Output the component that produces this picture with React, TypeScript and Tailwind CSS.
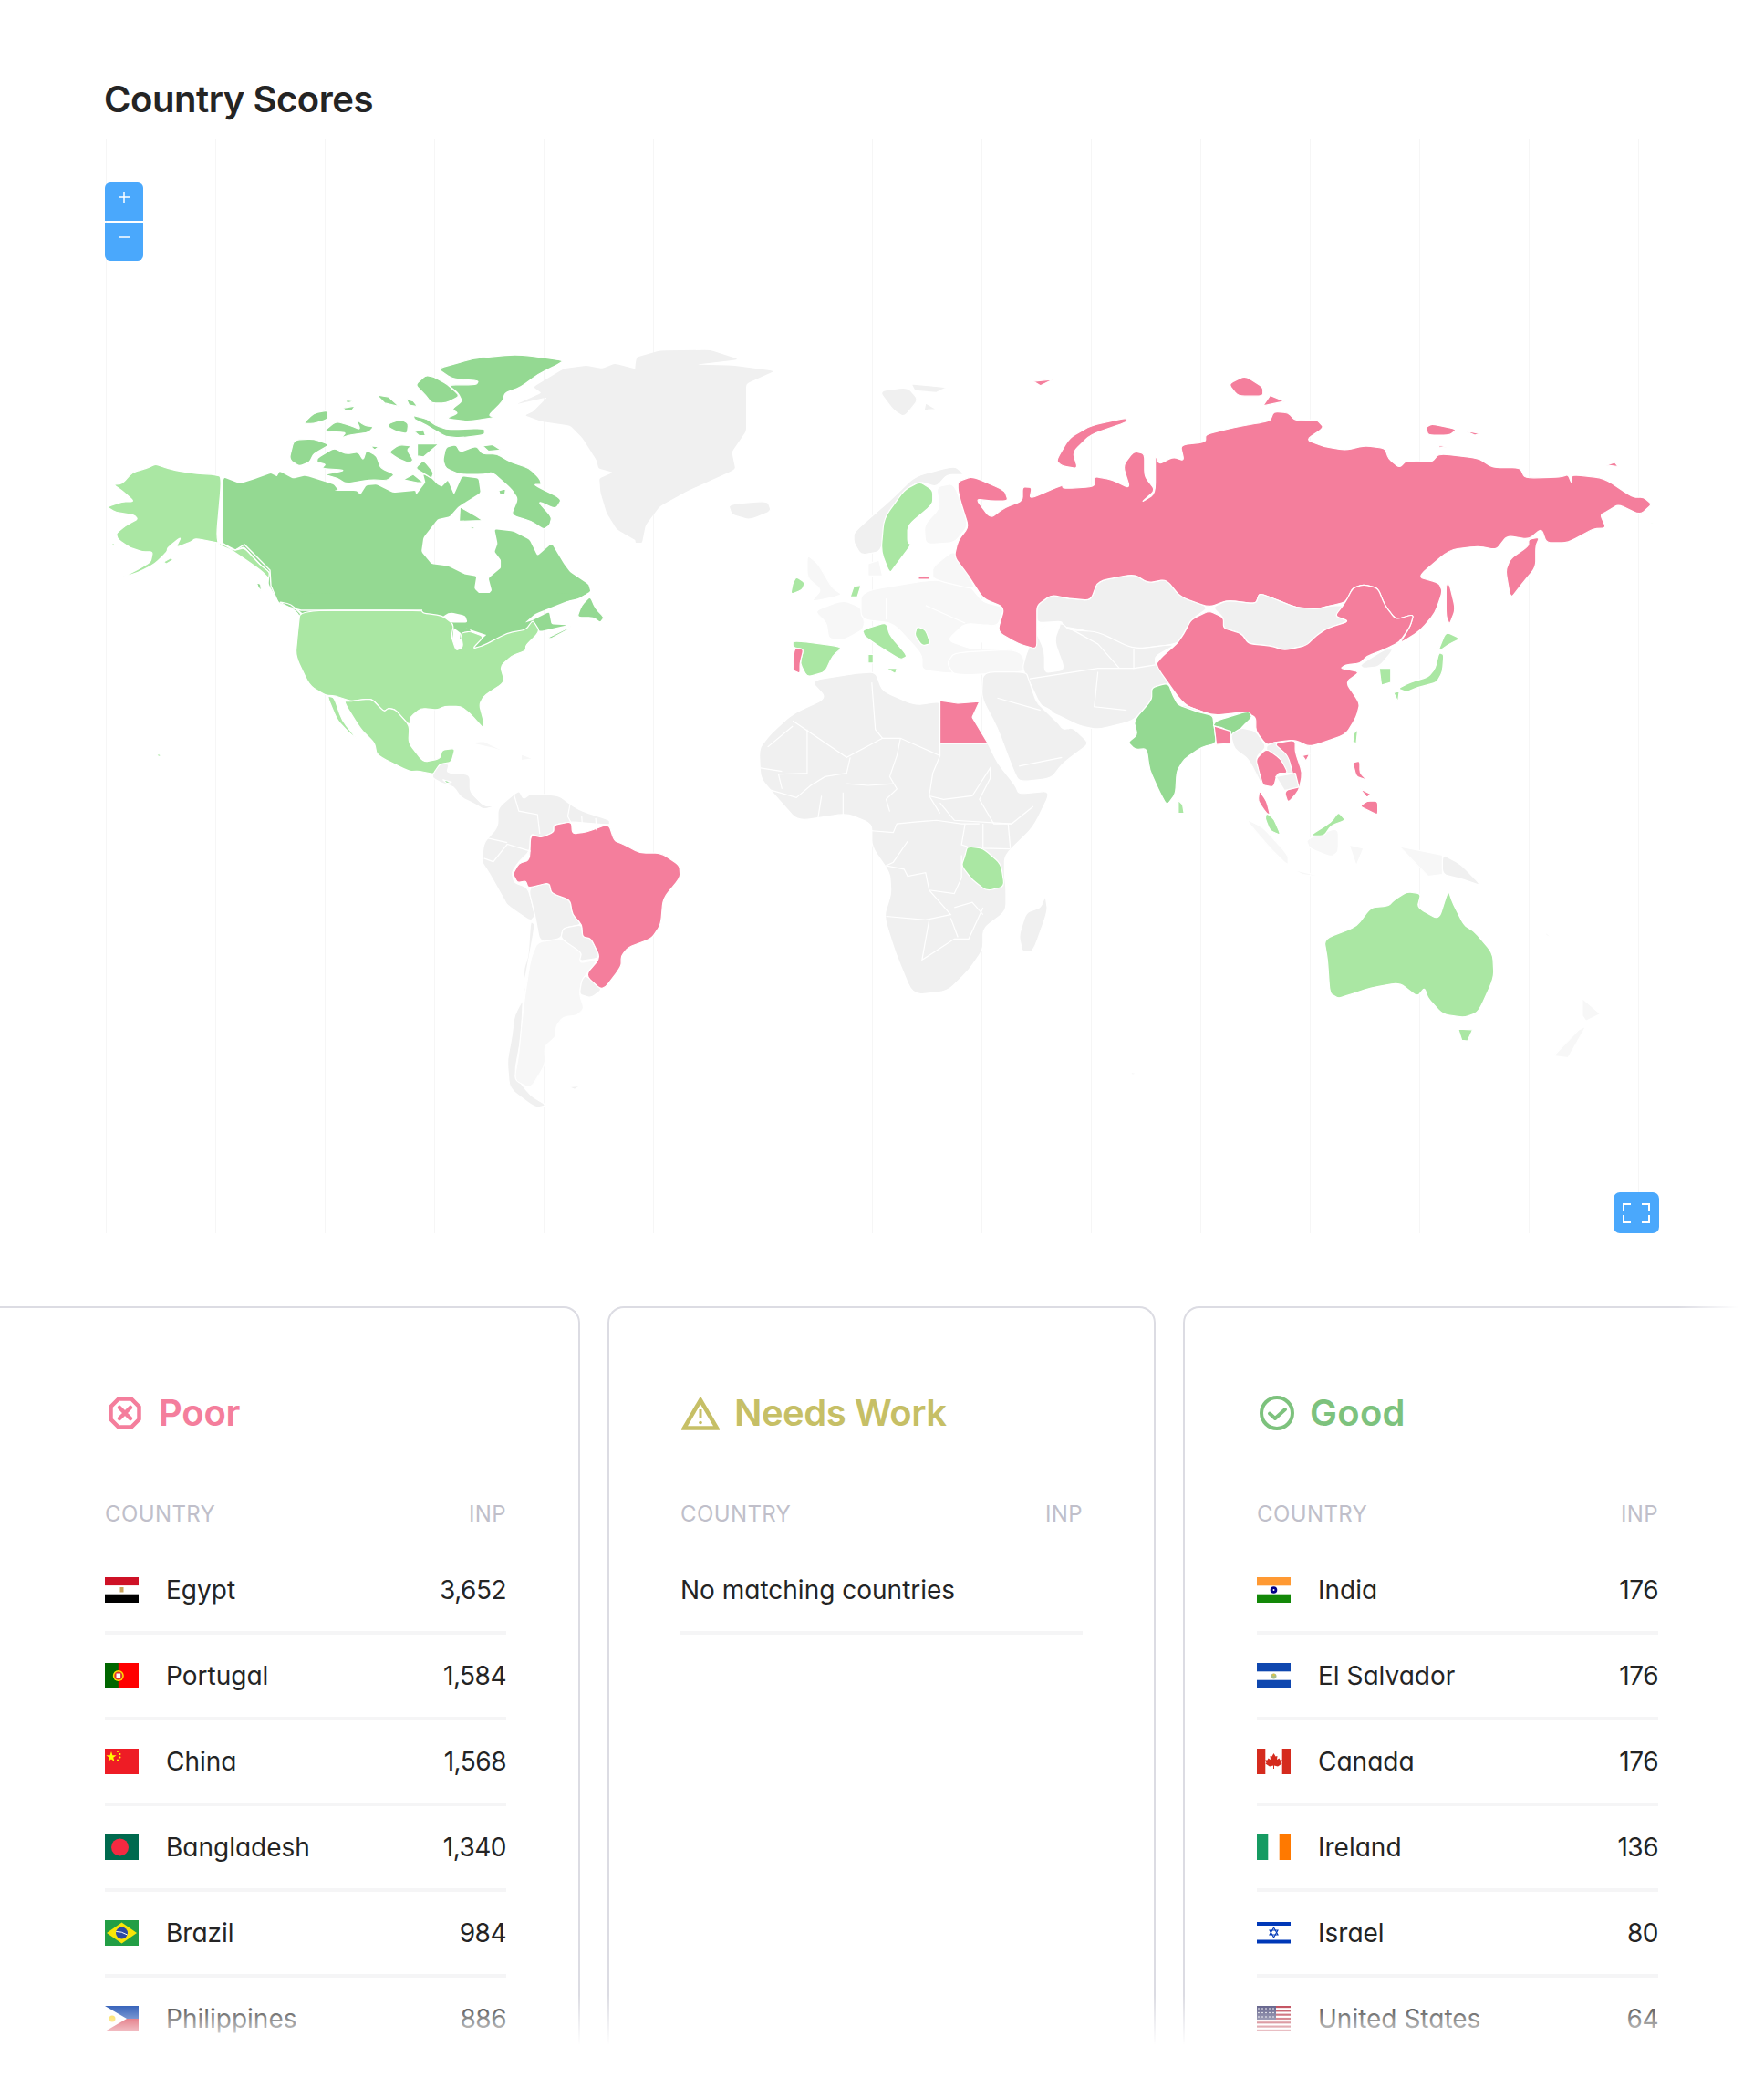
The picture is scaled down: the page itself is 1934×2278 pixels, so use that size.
import React from "react";

const PINK = "#f47e9c";
const G1 = "#aae7a3";
const G2 = "#94d992";
const GR = "#f0f0f0";
const LG = "#f7f7f7";

type Shape = [string, string, boolean?, boolean?];

const T1: Shape[] = [
  [G2, "548,1172 590,1188 630,1175 665,1162 680,1170 687,1158 720,1175 750,1168 820,1190 830,1203 820,1205 875,1205 885,1215 900,1192 925,1190 965,1210 1020,1205 1022,1215 1045,1185 1040,1165 1060,1175 1075,1190 1085,1195 1100,1180 1115,1215 1135,1170 1175,1175 1180,1210 1140,1235 1125,1245 1105,1268 1075,1275 1040,1320 1035,1355 1060,1385 1100,1390 1140,1410 1170,1415 1165,1445 1190,1470 1208,1450 1200,1420 1230,1395 1230,1375 1215,1355 1222,1335 1215,1300 1260,1305 1300,1325 1320,1365 1355,1335 1385,1385 1400,1405 1445,1435 1450,1452 1420,1470 1370,1480 1320,1495 1290,1525 1250,1568 800,1568 735,1498 685,1480 660,1435 662,1405 640,1385 600,1342 575,1350 546,1332", true],
  [G1, "545,1170 520,1165 480,1163 430,1155 405,1148 382,1140 360,1150 325,1160 300,1188 278,1190 300,1205 330,1232 300,1232 262,1245 285,1258 330,1265 338,1275 310,1290 285,1310 290,1325 320,1345 350,1355 375,1355 370,1380 340,1398 296,1420 340,1405 380,1385 410,1355 412,1345 445,1318 432,1345 470,1330 480,1322 545,1335 575,1352 600,1345 640,1388 662,1405 660,1420 640,1400 600,1372 570,1352 530,1335"],
  [G1, "402,1380 420,1370 425,1375 408,1385"],
  [G1, "270,1335 282,1335 280,1340"],
  [G2, "630,1430 640,1435 642,1452 634,1442"],
  [G2, "1075,905 1130,890 1165,880 1270,870 1385,885 1370,895 1320,920 1280,950 1240,965 1235,985 1200,1020 1215,1025 1150,1035 1095,1028 1125,1015 1110,1005 1135,985 1125,965 1100,945 1170,945 1175,935 1110,930"],
  [G2, "1045,922 1065,925 1100,945 1125,968 1125,975 1095,990 1060,990 1045,970 1020,945"],
  [G2, "925,970 955,975 980,998 945,990"],
  [G2, "998,980 1015,985 1025,998 1005,995"],
  [G2, "850,982 870,985 852,990"],
  [G2, "842,1002 872,997 865,1007 848,1008"],
  [G2, "745,1040 770,1015 805,1008 805,1030 770,1040"],
  [G2, "800,1055 825,1035 860,1045 885,1055 875,1030 895,1045 918,1048 905,1062 860,1068 838,1075 850,1062 800,1060"],
  [G2, "955,1040 985,1030 1003,1040 1000,1065 975,1060 955,1050"],
  [G2, "1015,1020 1050,1030 1070,1045 1100,1055 1190,1052 1190,1068 1130,1075 1095,1072 1065,1055 1040,1040 1018,1030"],
  [G2, "1018,1060 1040,1055 1045,1070 1030,1070"],
  [G2, "722,1080 770,1078 810,1092 770,1115 760,1135 735,1145 710,1128"],
  [G2, "780,1125 820,1100 850,1115 880,1110 892,1130 900,1105 925,1120 935,1150 970,1165 950,1180 910,1178 850,1188 830,1175 795,1165 850,1155 790,1150 800,1140 778,1135"],
  [G2, "910,1095 930,1097 920,1105"],
  [G2, "955,1110 980,1092 1010,1095 1000,1105 1015,1130 1005,1138 975,1125"],
  [G2, "1025,1090 1078,1090 1040,1122 1025,1120"],
  [G2, "1020,1150 1040,1130 1065,1160 1060,1175 1045,1165"],
  [G2, "990,1178 1015,1165 1040,1185 1025,1185"],
  [G2, "1088,1130 1095,1098 1120,1092 1130,1110 1170,1095 1185,1115 1220,1115 1255,1135 1300,1150 1325,1175 1330,1190 1310,1190 1380,1225 1365,1250 1320,1230 1355,1270 1350,1290 1335,1300 1305,1280 1255,1265 1272,1225 1255,1200 1210,1160 1190,1165 1130,1165 1095,1150"],
  [G2, "1185,1095 1210,1092 1230,1105 1200,1108"],
  [G2, "1130,1245 1170,1268 1185,1278 1128,1280"],
  [G2, "1155,1295 1170,1293 1160,1300"],
  [G2, "1225,1205 1242,1200 1240,1215 1228,1215"],
  [GR, "1385,905 1440,898 1480,905 1510,893 1575,910 1575,1335 1515,1300 1490,1260 1475,1210 1472,1175 1505,1160 1470,1150 1465,1130 1430,1075 1400,1045 1330,1035 1290,1020 1310,1010 1345,975 1268,993 1330,965 1310,950", true],
];

const T3: Shape[] = [
  [G2, "640,0 1265,0 1215,25 1150,60 1128,85 1145,78 1180,55 1185,90 1220,92 1160,110 1145,78 1130,105 1090,115 1040,150 1015,160 1040,125 1000,110 990,115 1005,90 975,90 950,65 905,50 645,50", true],
  [G2, "598,25 625,32 650,65 650,80 635,50"],
  [G2, "1250,35 1268,10 1280,45 1298,70 1290,85 1275,70 1240,70"],
  [G2, "1175,130 1228,95 1220,105 1185,130"],
  ["#ffffff", "935,85 965,55 1000,65 1005,85 975,85 950,82"],
  ["#ffffff", "975,100 990,115 985,160 970,155"],
  ["#ffffff", "1000,100 1045,120 1020,150 1010,105"],
  [G1, "645,50 905,50 910,58 950,65 975,90 970,125 980,165 995,155 990,115 1010,110 1040,125 1015,160 1040,150 1090,115 1130,105 1145,78 1160,110 1130,150 1130,165 1100,180 1075,210 1085,255 1040,295 1030,320 1040,370 1040,390 1010,345 990,325 955,325 940,335 905,330 882,355 880,380 850,335 835,330 825,340 800,305 780,305 755,310 720,295 700,293 665,265 635,180 640,110"],
  [G1, "738,310 755,310 780,305 800,305 825,340 835,330 850,335 880,380 878,430 910,485 945,475 950,450 978,445 970,485 945,490 935,520 900,510 880,512 810,465 805,430 775,390"],
  [G1, "703,295 718,300 735,365 768,420 750,400 725,365"],
  [G1, "338,460 347,465 340,470"],
  [GR, "930,520 945,490 965,490 960,515 1010,520 1010,570 1040,610 1065,610 1040,620 1020,605 990,585 975,555 950,545 930,530"],
  [G2, "952,535 970,542 960,545"],
  [LG, "1005,428 1040,425 1090,458 1060,445"],
  [LG, "1120,462 1145,475 1120,480"],
  [GR, "1070,615 1115,565 1125,590 1140,575 1200,580 1225,605 1250,625 1310,650 1310,665 1228,655 1190,665 1190,685 1165,700 1140,690 1138,740 1115,770 1100,800 1105,830 1135,845 1150,925 1140,940 1090,895 1080,870 1050,800 1035,770 1040,715 1070,670"],
  [GR, "1140,940 1135,1040 1125,1080 1130,1150 1105,1210 1100,1270 1090,1340 1095,1420 1150,1475 1175,1468 1140,1440 1105,1380 1120,1270 1125,1130 1150,950"],
  [LG, "1155,1000 1210,990 1250,1030 1245,1060 1285,1050 1250,1110 1245,1150 1255,1190 1240,1210 1210,1215 1195,1240 1195,1270 1170,1300 1172,1350 1140,1420 1105,1395 1115,1320 1125,1180 1140,1050"],
  [GR, "1135,845 1180,830 1185,860 1225,880 1230,920 1250,950 1210,960 1205,990 1160,1000 1150,925"],
  [GR, "1210,960 1250,950 1252,985 1270,990 1290,1045 1245,1055 1250,1030 1205,990"],
  [GR, "1258,1095 1295,1135 1270,1160 1245,1150 1250,1110"],
  [PINK, "1140,693 1165,700 1190,685 1190,665 1228,655 1230,690 1260,685 1308,662 1320,710 1340,720 1375,745 1420,745 1460,780 1462,815 1425,875 1420,950 1400,990 1350,1015 1335,1040 1335,1070 1295,1140 1258,1095 1290,1045 1270,990 1252,985 1250,950 1230,920 1225,880 1185,860 1180,830 1135,845 1130,825 1112,830 1102,805 1115,775 1138,765"],
  [GR, "1222,1415 1248,1412 1235,1422"],
];
const T3Lines = [
  "1105,580 1115,625 1155,635 1160,690",
  "1225,605 1220,640 1240,690",
  "1250,640 1252,680",
  "1280,645 1282,680",
  "1040,760 1060,770 1090,720 1140,740",
  "1040,700 1090,715",
];

const T2: Shape[] = [
  [GR, "-5,110 30,90 100,88 140,115 80,130 130,132 190,148 150,185 150,260 150,320 130,380 135,430 70,490 30,535 10,590 5,640 -5,640", true],
  [GR, "125,530 180,520 185,550 155,575 130,560"],
  [GR, "335,205 375,195 390,230 370,280 355,260"],
  [GR, "380,185 430,195 415,210 385,205"],
  [GR, "400,240 415,258 398,260"],
  [GR, "300,610 350,520 385,450 440,420 455,445 430,445 415,480 392,465 370,490 345,570 338,665 310,675 300,640"],
  [G1, "370,490 392,465 410,490 410,530 375,590 375,640 380,645 360,700 350,728 338,665 342,570"],
  [LG, "415,480 440,470 460,590 440,640 400,645 398,590 420,540"],
  [LG, "320,700 335,690 340,735 320,735"],
  [LG, "235,675 250,700 270,770 285,790 240,810 255,775 235,740"],
  [G1, "220,738 232,755 228,775 212,788 215,755"],
  [LG, "245,835 285,805 310,825 315,870 312,890 285,920 265,915 262,870"],
  [LG, "310,780 410,745 460,760 480,810 510,825 500,880 455,870 430,920 465,945 530,945 535,1000 435,1015 395,1005 395,960 355,870 310,860"],
  [LG, "410,710 440,660 460,735 470,775 410,745"],
  [LG, "430,985 440,955 530,945 545,1010 440,1020"],
  ["#ffffff", "440,895 490,870 500,905 470,935 440,920"],
  [G1, "300,765 310,762 305,795 295,795"],
  [G1, "215,920 285,938 270,965 260,1010 235,1025 225,985 230,945 215,940"],
  [PINK, "217,942 230,945 225,985 225,1015 215,1005"],
  [G1, "312,890 345,868 350,905 375,965 365,975 330,930 315,908"],
  [G1, "345,1000 360,1000 358,1015"],
  [G1, "320,960 327,960 327,985 320,985"],
  [G1, "388,880 400,890 407,930 395,935 385,905"],
  [GR, "555,820 575,790 600,800 630,805 640,750 690,730 710,755 735,745 755,795 795,825 770,860 760,900 750,930 690,945 660,920 620,890 590,880 590,865 555,870"],
  [GR, "555,885 590,870 600,890 640,895 690,945 750,930 720,965 720,990 745,1040 715,1055 715,1090 690,1150 640,1175 615,1165 575,1125 560,1105 545,1040 535,1000 540,960"],
  [GR, "478,1085 500,1170 520,1280 530,1325 575,1315 590,1275 605,1250 628,1215 605,1170 590,1175 575,1120 555,1100 545,1040 540,1010 480,1010"],
  ["#ffffff", "552,890 590,865 580,920 595,1005 565,1015 565,950"],
  ["#ffffff", "555,1100 575,1120 600,1175 585,1160"],
  [PINK, "445,465 465,450 510,490 515,520 490,520 470,515 490,570 510,540 535,520 535,480 548,482 545,515 590,475 592,485 635,480 635,450 660,460 685,485 675,420 690,378 705,385 705,450 720,490 700,525 720,500 720,385 725,415 745,395 760,405 755,360 790,352 790,330 830,310 870,295 880,290 885,265 905,268 915,290 945,288 955,310 930,345 955,365 985,375 1012,362 1040,370 1045,400 1060,425 1070,405 1105,410 1115,385 1170,398 1190,425 1228,425 1235,455 1285,452 1295,445 1300,470 1300,445 1345,455 1385,510 1400,510 1412,530 1395,560 1365,530 1350,550 1340,560 1348,598 1330,600 1295,640 1265,640 1258,600 1240,630 1210,620 1195,660 1170,650 1130,660 1085,738 1115,755 1120,780 1110,840 1090,890 1060,930 1075,880 1080,845 1055,860 1040,820 1030,770 1010,760 995,770 985,810 965,820 945,830 915,825 885,800 865,785 860,815 820,805 795,825 755,795 735,745 710,755 690,730 640,750 630,805 600,800 575,790 555,820 555,870 555,885 555,945 530,930 500,895 510,825 480,800 460,735 440,680 445,635 460,595 450,530 445,490"],
  [PINK, "582,405 600,340 630,305 680,282 680,295 630,330 605,380 612,428 590,420"],
  [PINK, "822,185 845,162 870,195 870,220 835,220"],
  [PINK, "880,218 900,235 870,248"],
  [PINK, "1097,310 1105,300 1140,315 1130,332 1100,332"],
  [PINK, "1150,318 1172,328 1165,332"],
  [PINK, "1115,362 1130,365 1115,368"],
  [PINK, "1348,418 1360,410 1365,422"],
  [PINK, "550,178 578,172 560,190"],
  [PINK, "1125,760 1130,760 1138,830 1130,875 1125,850"],
  [PINK, "1240,630 1255,625 1250,650 1250,710 1230,760 1215,800 1208,720 1215,685 1240,650"],
  [PINK, "390,738 405,735 405,745 390,745"],
  [G1, "1405,578 1418,585 1408,582"],
  [GR, "800,825 820,805 860,815 865,785 885,800 915,825 945,830 965,820 985,820 970,850 990,865 960,885 945,905 930,935 900,948 880,935 850,930 840,900 815,885 815,855"],
  [PINK, "795,835 815,855 815,885 840,900 850,930 880,935 900,948 930,935 945,905 960,885 990,865 970,850 985,810 995,770 1010,760 1030,770 1040,820 1055,860 1080,845 1075,880 1060,925 1040,945 1015,965 1005,985 985,990 978,1000 1005,1010 985,1040 1005,1100 1000,1140 985,1190 935,1225 915,1205 890,1210 875,1220 860,1180 860,1140 845,1125 800,1135 760,1105 720,990 730,965 750,930 760,900 770,860"],
  [GR, "1005,990 1040,945 1052,945 1032,995 1010,1000"],
  [G1, "1032,1000 1048,1000 1048,1040 1035,1048"],
  [G1, "1115,945 1125,895 1145,915 1130,930 1117,948"],
  [G1, "1115,955 1122,960 1120,1010 1112,1040 1085,1055 1070,1068 1058,1058 1075,1040 1100,1025 1110,1000"],
  [G1, "1052,1070 1060,1065 1058,1095"],
  [GR, "750,1110 760,1105 800,1135 790,1140"],
  [G2, "715,1055 738,1042 745,1080 752,1105 780,1125 800,1135 802,1165 805,1215 785,1225 760,1260 750,1295 748,1360 736,1392 725,1350 712,1290 708,1230 692,1232 682,1212 695,1190 690,1150 715,1090"],
  [G2, "805,1150 850,1122 855,1140 840,1170 830,1200 815,1170 800,1165"],
  [PINK, "802,1165 825,1180 825,1215 805,1218"],
  [G1, "752,1378 758,1390 760,1415 752,1415"],
  [GR, "840,1170 860,1180 875,1225 860,1255 870,1340 850,1260 830,1230 825,1190"],
  [GR, "875,1220 890,1210 915,1240 925,1300 890,1300 875,1240"],
  [PINK, "860,1260 875,1230 895,1260 905,1300 890,1300 885,1340 870,1335 865,1300"],
  [PINK, "885,1215 915,1205 915,1240 925,1300 920,1350 905,1385 900,1355 915,1330 905,1250"],
  [GR, "888,1310 915,1300 920,1340 900,1350"],
  [PINK, "865,1350 875,1380 880,1420 875,1415 863,1380"],
  [G1, "875,1415 885,1430 895,1478 880,1465 873,1430"],
  [G1, "935,1480 965,1440 975,1412 985,1435 965,1450 955,1480"],
  [PINK, "925,1250 935,1245 930,1265"],
  [G1, "997,1185 1002,1175 1000,1215 995,1210"],
  [PINK, "995,1270 1005,1265 1005,1300 1015,1320 1000,1310"],
  [PINK, "1015,1380 1030,1380 1030,1420 1020,1410 1005,1395"],
  [PINK, "1005,1345 1020,1360 1015,1370"],
];
const T2Lines = [
  "605,890 640,930 670,1000",
  "640,1010 635,1110 680,1120",
  "545,1030 640,1000 690,1000",
  "500,1085 560,1120",
  "530,1280 590,1255",
  "690,945 690,1000 720,990",
  "345,800 345,860",
  "400,820 455,870",
];

const T4: Shape[] = [
  [GR, "240,-10 300,-30 330,-35 340,20 385,60 420,50 465,80 465,95 487,170 500,225 525,290 530,315 575,305 550,410 510,490 510,550 512,580 512,650 480,700 480,760 460,820 430,880 382,890 358,770 342,665 352,600 350,540 325,465 325,400 290,370 222,392 195,330 170,270 168,185 185,140 215,85 262,40"],
  [PINK, "420,47 445,55 475,50 465,95 487,170 420,170", false, true],
  [G1, "458,465 480,470 505,515 510,580 485,592 465,560 450,520 455,490"],
  [GR, "567,605 570,650 550,765 535,768 530,720 540,655 560,640"],
  [LG, "845,385 870,410 905,490 905,520 880,470"],
  [LG, "910,530 960,555 925,545"],
  [LG, "930,445 975,410 975,480 965,495 935,470"],
  [LG, "990,460 1010,470 1000,520"],
  [LG, "1060,465 1120,490 1120,545 1100,550"],
  [GR, "1120,488 1145,515 1175,578 1150,560 1120,545"],
  [LG, "1315,900 1340,945 1320,965 1315,950"],
  [LG, "1310,990 1275,1065 1295,1070 1320,980"],
  [LG, "1260,705 1275,730 1265,720"],
  [LG, "685,1110 694,1115 688,1120"],
  [G1, "1052,620 1070,595 1090,600 1085,640 1115,675 1128,590 1135,630 1150,690 1165,710 1190,770 1192,840 1170,940 1150,955 1120,945 1100,900 1095,870 1085,895 1060,855 1020,870 990,890 975,900 963,885 960,790 955,730 1000,695 1020,640 1045,635"],
  [G1, "1142,988 1162,990 1155,1022 1147,1020"],
];
const T4Lines = [
  "215,105 290,210 340,155 365,155 420,205 420,170",
  "235,130 235,255 195,258 200,300",
  "325,-5 330,130 340,155",
  "365,155 360,205 350,265 360,300 345,330 350,365",
  "420,205 410,255 405,320 420,370",
  "295,210 290,255 260,265 240,290 220,325 170,295",
  "255,320 250,385",
  "285,310 285,375",
  "290,285 320,290 355,285",
  "405,320 425,330 465,320 490,240 490,270 475,330 495,400 520,400 550,350",
  "420,340 440,390 520,400",
  "325,420 355,425 360,400 385,395 415,390 450,400 475,400",
  "375,450 355,510 345,520 370,530 375,550 400,540 405,590 440,600 450,555 450,490",
  "455,400 450,460 458,465",
  "480,400 480,470 518,472",
  "515,400 518,470",
  "345,665 400,675 435,660 405,590",
  "405,675 395,790 410,770 440,730 460,730 480,640",
  "435,670 445,725",
  "440,640 465,625 480,660",
  "180,180 215,120",
  "170,240 200,250",
];

function smooth(points: string, t = 0.28): string {
  const pts = points.trim().split(/\s+/).map((s) => s.split(",").map(Number));
  const n = pts.length;
  if (n < 5) return "M" + pts.map((p) => p.join(" ")).join("L") + "Z";
  let d = "";
  for (let i = 0; i < n; i++) {
    const p = pts[i];
    const a = pts[(i - 1 + n) % n];
    const b = pts[(i + 1) % n];
    const sx = p[0] + (a[0] - p[0]) * t;
    const sy = p[1] + (a[1] - p[1]) * t;
    const ex = p[0] + (b[0] - p[0]) * t;
    const ey = p[1] + (b[1] - p[1]) * t;
    d += (i === 0 ? "M" : "L") + sx.toFixed(1) + " " + sy.toFixed(1) + "Q" + p[0] + " " + p[1] + " " + ex.toFixed(1) + " " + ey.toFixed(1);
  }
  return d + "Z";
}

function Group({ tr, shapes, lines }: { tr: string; shapes: Shape[]; lines?: string[] }) {
  return (
    <g transform={tr}>
      {shapes.map(([c, p, ns, sharp], i) => (
        <path key={i} d={smooth(p, sharp ? 0.03 : ns ? 0.12 : 0.28)} fill={c} stroke={ns ? "none" : "#fff"} strokeWidth={c === "#ffffff" ? 0 : 1.2} vectorEffect="non-scaling-stroke" strokeLinejoin="round" />
      ))}
      {(lines || []).map((p, i) => (
        <polyline key={i} points={p} fill="none" stroke="#fff" strokeWidth={1.2} vectorEffect="non-scaling-stroke" />
      ))}
    </g>
  );
}

function WorldMap() {
  return (
    <svg viewBox="115 152 1704 1200" width={1704} height={1200} className="absolute inset-0 overflow-visible">
      <Group tr="translate(700 750) scale(0.787 0.3827)" shapes={T4} lines={T4Lines} />
      <Group tr="scale(0.4464)" shapes={T1} />
      <Group tr="translate(0 650) scale(0.5102 0.3827)" shapes={T3} lines={T3Lines} />
      <Group tr="translate(700 350) scale(0.787 0.3827)" shapes={T2} lines={T2Lines} />
      <polyline points="244,522 244,596 258,603 268,597 296,625 297,642 306,663 330,669 463,669" fill="none" stroke="#fff" strokeWidth={1.4} />
    </svg>
  );
}

function Flag({ code }: { code: string }) {
  const s = (inner: React.ReactNode) => (
    <svg viewBox="0 0 37 28" width={37} height={28} className="shrink-0">{inner}</svg>
  );
  switch (code) {
    case "eg":
      return s(<><rect width="37" height="9.3" fill="#ce1126" /><rect y="9.3" width="37" height="9.4" fill="#fff" /><rect y="18.7" width="37" height="9.3" fill="#000" /><rect x="16.5" y="11" width="4" height="5.5" fill="#c9a55c" /></>);
    case "pt":
      return s(<><rect width="37" height="28" fill="#ff0000" /><rect width="14.8" height="28" fill="#006600" /><circle cx="14.8" cy="14" r="6" fill="#ffe000" /><circle cx="14.8" cy="14" r="4.5" fill="#d33" /><rect x="12.5" y="11.5" width="4.6" height="5" fill="#fff" /></>);
    case "cn":
      return s(<><rect width="37" height="28" fill="#ee1c25" /><polygon points="7,3 8.4,7.2 12.6,7.2 9.2,9.8 10.5,14 7,11.4 3.5,14 4.8,9.8 1.4,7.2 5.6,7.2" fill="#ffff00" /><circle cx="14" cy="3" r="1" fill="#ffff00" /><circle cx="16.5" cy="6" r="1" fill="#ffff00" /><circle cx="16.5" cy="9.5" r="1" fill="#ffff00" /><circle cx="14" cy="12.5" r="1" fill="#ffff00" /></>);
    case "bd":
      return s(<><rect width="37" height="28" fill="#006a4e" /><circle cx="16.5" cy="14" r="9.5" fill="#f42a41" /></>);
    case "br":
      return s(<><rect width="37" height="28" fill="#229e45" /><polygon points="18.5,2.5 35,14 18.5,25.5 2,14" fill="#f8e509" /><circle cx="18.5" cy="14" r="6.5" fill="#2b49a3" /><path d="M12.3 12.5 Q18 12 24.6 16" stroke="#fff" strokeWidth="1" fill="none" /></>);
    case "ph":
      return s(<><rect width="37" height="14" fill="#0038a8" /><rect y="14" width="37" height="14" fill="#ce1126" /><polygon points="0,0 24,14 0,28" fill="#fff" /><circle cx="8" cy="14" r="3.5" fill="#fcd116" /></>);
    case "in":
      return s(<><rect width="37" height="9.3" fill="#ff9933" /><rect y="18.7" width="37" height="9.3" fill="#138808" /><circle cx="18.5" cy="14" r="3.8" fill="#000088" /><circle cx="18.5" cy="14" r="1" fill="#fff" /></>);
    case "sv":
      return s(<><rect width="37" height="9.3" fill="#0f47af" /><rect y="18.7" width="37" height="9.3" fill="#0f47af" /><circle cx="18.5" cy="14.5" r="3" fill="#a9c08a" /><circle cx="18.5" cy="13" r="1.2" fill="#e8c33b" /></>);
    case "ca":
      return s(<><rect width="9.3" height="28" fill="#d52b1e" /><rect x="27.7" width="9.3" height="28" fill="#d52b1e" /><polygon points="18.5,5 20.5,8.5 22.5,8 22,12 24.5,10.5 25.5,12.5 28,12.5 26.5,15.5 27.5,16.5 23,19.5 19,18.5 19,22 18,22 18,18.5 14,19.5 9.5,16.5 10.5,15.5 9,12.5 11.5,12.5 12.5,10.5 15,12 14.5,8 16.5,8.5" fill="#d52b1e" /></>);
    case "ie":
      return s(<><rect width="12.3" height="28" fill="#169b62" /><rect x="24.7" width="12.3" height="28" fill="#ff7900" /></>);
    case "il":
      return s(<><rect y="2" width="37" height="4" fill="#0038b8" /><rect y="21.5" width="37" height="4" fill="#0038b8" /><polygon points="18.5,8 23,16 14,16" fill="none" stroke="#0038b8" strokeWidth="1.1" /><polygon points="18.5,19 23,11 14,11" fill="none" stroke="#0038b8" strokeWidth="1.1" /></>);
    default:
      return s(<>
        <rect width="37" height="28" fill="#fff" />
        {[0, 2, 4, 6, 8, 10, 12].map((i) => <rect key={i} y={i * 2.154} width="37" height="2.154" fill="#b22234" />)}
        <rect width="21" height="15" fill="#3c3b6e" />
        {[2, 6, 10, 14, 18].map((x) => [3, 7.5, 12].map((y) => <circle key={`${x}-${y}`} cx={x} cy={y} r="0.8" fill="#fff" />))}
      </>);
  }
}

type Row = [string, string, string];
const poor: Row[] = [
  ["eg", "Egypt", "3,652"],
  ["pt", "Portugal", "1,584"],
  ["cn", "China", "1,568"],
  ["bd", "Bangladesh", "1,340"],
  ["br", "Brazil", "984"],
  ["ph", "Philippines", "886"],
];
const good: Row[] = [
  ["in", "India", "176"],
  ["sv", "El Salvador", "176"],
  ["ca", "Canada", "176"],
  ["ie", "Ireland", "136"],
  ["il", "Israel", "80"],
  ["us", "United States", "64"],
];

function TableHead() {
  return (
    <div className="mt-[71px] mb-[22px] flex h-8 items-center justify-between text-[24px] leading-8 tracking-[0.4px] text-[#c0bfca]">
      <span>COUNTRY</span>
      <span>INP</span>
    </div>
  );
}

function Rows({ rows }: { rows: Row[] }) {
  return (
    <div>
      {rows.map(([code, name, v]) => (
        <div key={name} className="flex h-[94px] items-center border-b-4 border-[#f5f5f6] text-[28px] text-[#242424]">
          <Flag code={code} />
          <span className="ml-[30px] flex-1">{name}</span>
          <span className="tracking-[-0.5px]">{v}</span>
        </div>
      ))}
    </div>
  );
}

export default function App() {
  return (
    <div className="relative h-[2278px] w-[1934px] overflow-hidden bg-white font-['Inter',sans-serif] [font-feature-settings:'cv11']">
      <h1 className="ml-[114px] pt-[85px] text-[40px] leading-[48px] font-semibold tracking-[-0.45px] text-[#242424]">Country Scores</h1>

      <div className="relative mt-[19px] ml-[115px] h-[1200px] w-[1704px]">
        <div className="absolute top-0 bottom-0 left-px flex w-[1681px] justify-between">
          {Array.from({ length: 15 }).map((_, i) => (
            <div key={i} className="h-full w-px bg-[#f6f6f6]" />
          ))}
        </div>
        <WorldMap />
        <div className="absolute top-[48px] left-0 flex w-[42px] flex-col gap-[2px]">
          <button className="flex h-[42px] items-start justify-center rounded-t-[6px] bg-[#4aa8fc] pt-[9px]">
            <svg width="14" height="14" viewBox="0 0 14 14"><path d="M7 1v12M1 7h12" stroke="#fff" strokeWidth="1.5" /></svg>
          </button>
          <button className="flex h-[42px] items-start justify-center rounded-b-[6px] bg-[#4aa8fc] pt-[9px]">
            <svg width="14" height="14" viewBox="0 0 14 14"><path d="M1 7h12" stroke="#fff" strokeWidth="1.5" /></svg>
          </button>
        </div>
        <button className="absolute top-[1155px] left-[1654px] flex h-[45px] w-[50px] items-center justify-center rounded-[7px] bg-[#4aa8fc]">
          <svg width="30" height="22" viewBox="0 0 30 22" fill="none" stroke="#fff" strokeWidth="2">
            <path d="M9 1H1v8M21 1h8v8M9 21H1v-8M21 21h8v-8" />
          </svg>
        </button>
      </div>

      <div className="mt-[80px] flex gap-[30px]">
        <section className="h-[900px] w-[636px] shrink-0 rounded-tr-[18px] border-t-2 border-r-2 border-[#dcdce3] pt-[91px] pr-[79px] pl-[115px]">
          <div className="flex h-12 items-center">
            <svg width="36" height="36" viewBox="0 0 36 36" fill="none" stroke={PINK} strokeWidth="4.5" className="ml-[4px]">
              <polygon points="11,2.5 25,2.5 33.5,11 33.5,25 25,33.5 11,33.5 2.5,25 2.5,11" strokeLinejoin="round" />
              <path d="M12 12l12 12M24 12L12 24" strokeLinecap="round" />
            </svg>
            <span className="ml-[19px] text-[40px] leading-[48px] font-semibold tracking-[-0.2px] text-[#f47e9c]">Poor</span>
          </div>
          <TableHead />
          <Rows rows={poor} />
        </section>

        <section className="h-[900px] w-[601px] shrink-0 rounded-t-[18px] border-x-2 border-t-2 border-[#dcdce3] px-[78px] pt-[91px]">
          <div className="flex h-12 items-center">
            <svg width="42" height="37" viewBox="0 0 42 37" fill="none" stroke="#c6bf66" strokeWidth="4.5" className="ml-[1px]">
              <polygon points="21,4 39,34.5 3,34.5" strokeLinejoin="miter" />
              <path d="M21 14v10" strokeWidth="3" />
              <circle cx="21" cy="28.5" r="1.8" fill="#c6bf66" stroke="none" />
            </svg>
            <span className="ml-[16px] text-[40px] leading-[48px] font-semibold tracking-[-0.45px] text-[#c6bf66]">Needs Work</span>
          </div>
          <TableHead />
          <div className="flex h-[94px] items-center border-b-4 border-[#f5f5f6] text-[28px] text-[#242424]">No matching countries</div>
        </section>

        <section className="h-[900px] flex-1 rounded-tl-[18px] border-t-2 border-l-2 border-[#dcdce3] pt-[91px] pr-[116px] pl-[79px]">
          <div className="flex h-12 items-center">
            <svg width="38" height="38" viewBox="0 0 38 38" fill="none" stroke="#7dc27d" strokeWidth="4" className="ml-[3px]">
              <circle cx="19" cy="19" r="17" />
              <path d="M11 19.5l6 5.5 11-10" strokeLinecap="round" strokeLinejoin="round" />
            </svg>
            <span className="ml-[17px] text-[40px] leading-[48px] font-semibold tracking-[0.3px] text-[#7dc27d]">Good</span>
          </div>
          <TableHead />
          <Rows rows={good} />
        </section>
      </div>

      <div className="absolute top-[1425px] right-0 h-[12px] w-[94px] bg-gradient-to-r from-transparent to-white to-70%" />
      <div className="absolute inset-x-0 top-[2187px] bottom-0 bg-gradient-to-b from-transparent to-white to-60%" />
    </div>
  );
}
